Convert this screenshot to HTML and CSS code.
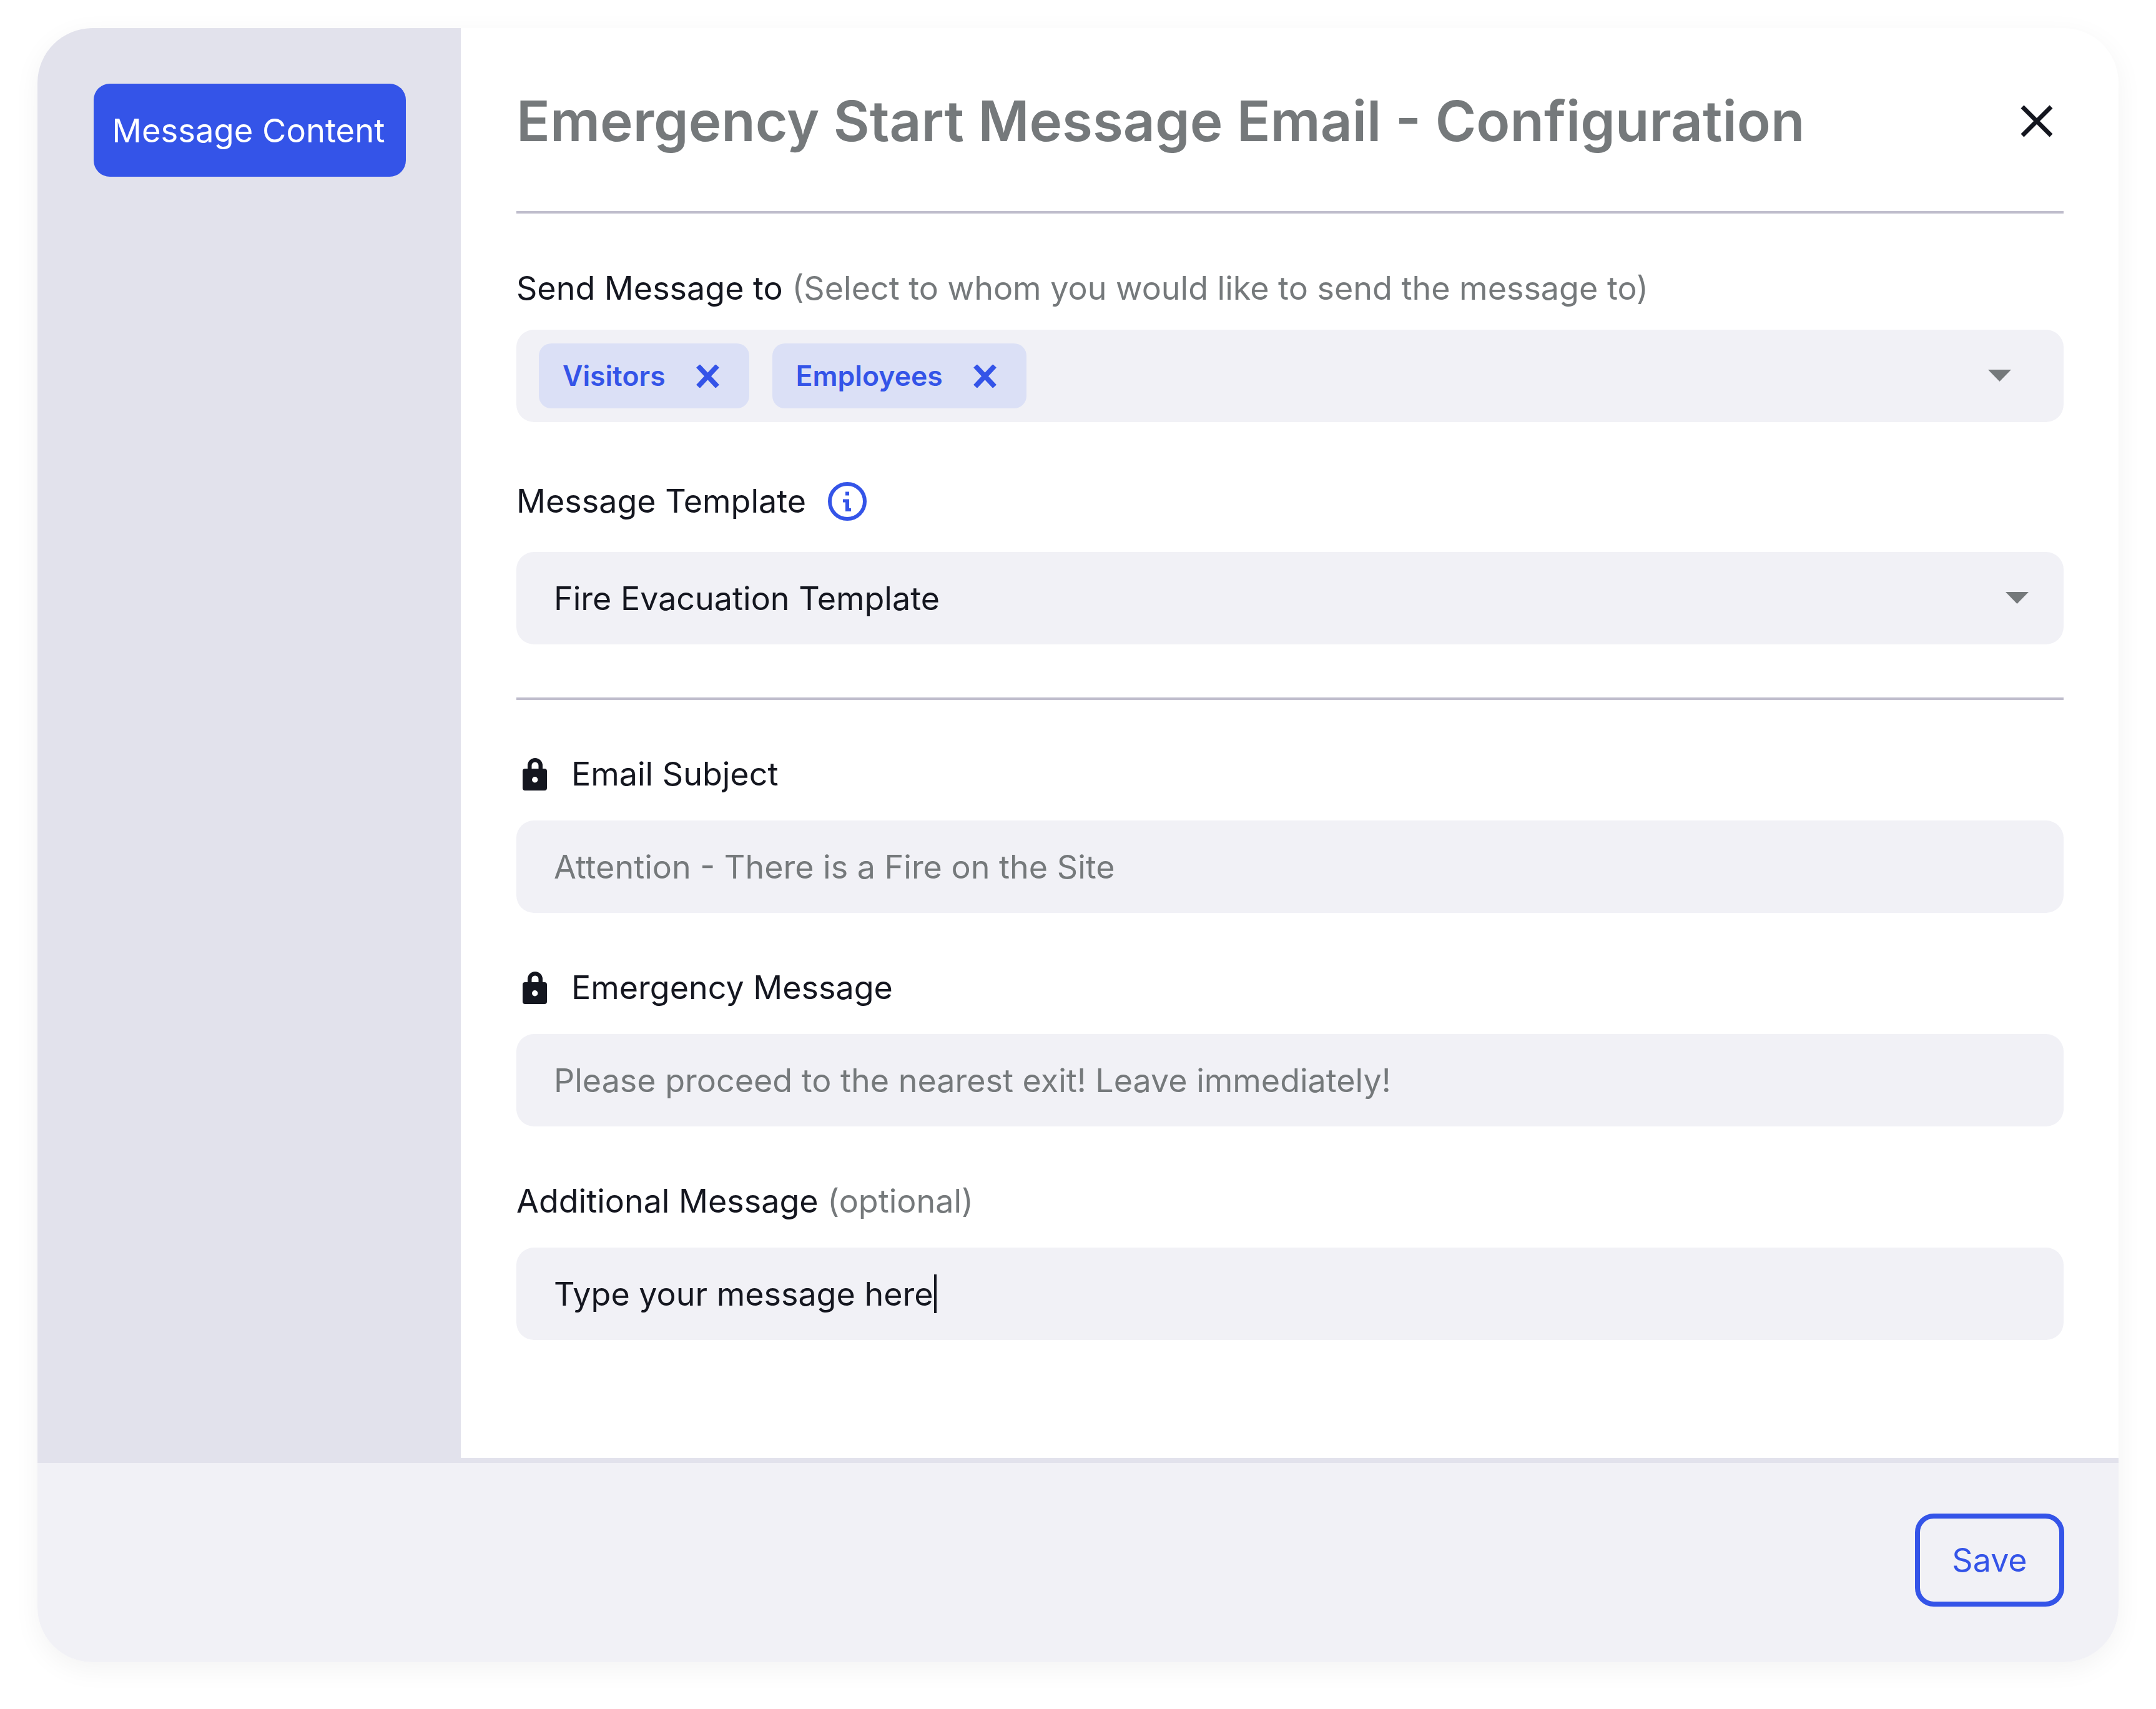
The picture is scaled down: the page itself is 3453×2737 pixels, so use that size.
FILE: index.html
```html
<!DOCTYPE html>
<html lang="en">
<head>
<meta charset="utf-8">
<title>Emergency Start Message Email - Configuration</title>
<link rel="stylesheet" href="styles.css">
</head>
<body>
<div class="card">
  <div class="body">
    <aside class="sidebar">
      <button class="tab">Message Content</button>
    </aside>
    <main class="main">
      <header class="header">
        <h1 class="title">Emergency Start Message Email - Configuration</h1>
        <svg class="close" viewBox="0 0 52 52"><path d="M3 3L49 49M49 3L3 49"/></svg>
      </header>
      <div class="label label-send"><span>Send Message to <span class="hint">(Select to whom you would like to send the message to)</span></span></div>
      <div class="input input-chips">
        <span class="chip">Visitors<svg class="chip-x" viewBox="0 0 37 37"><path d="M3 2L34 35M34 2L3 35"/></svg></span>
        <span class="chip">Employees<svg class="chip-x" viewBox="0 0 37 37"><path d="M3 2L34 35M34 2L3 35"/></svg></span>
        <svg class="caret caret-chips" viewBox="0 0 37 19"><path d="M0 0H37L18.5 19Z"/></svg>
      </div>
      <div class="label label-info"><span>Message Template</span><svg class="info" viewBox="0 0 62 62"><circle cx="31" cy="31" r="28"/><rect class="info-fill" x="28" y="15.5" width="6" height="6"/><path class="info-fill" d="M24 27.5H34V42H37V47H28V32.5H24Z"/></svg></div>
      <div class="input"><span>Fire Evacuation Template</span>
        <svg class="caret" viewBox="0 0 37 19"><path d="M0 0H37L18.5 19Z"/></svg>
      </div>
      <hr class="rule">
      <div class="label label-lock"><svg class="lock" viewBox="0 0 39 52"><path d="M8 18V12a12 12 0 0 1 24 0V18H25.5V12a5.5 5.5 0 0 0-11 0V18Z"/><path fill-rule="evenodd" d="M4 17H35a4 4 0 0 1 4 4V48a4 4 0 0 1-4 4H4a4 4 0 0 1-4-4V21a4 4 0 0 1 4-4ZM19.7 30a4.7 4.7 0 1 0 0 9.4a4.7 4.7 0 1 0 0-9.4Z"/></svg>Email Subject</div>
      <div class="input input-muted">Attention - There is a Fire on the Site</div>
      <div class="label label-lock label-next"><svg class="lock" viewBox="0 0 39 52"><path d="M8 18V12a12 12 0 0 1 24 0V18H25.5V12a5.5 5.5 0 0 0-11 0V18Z"/><path fill-rule="evenodd" d="M4 17H35a4 4 0 0 1 4 4V48a4 4 0 0 1-4 4H4a4 4 0 0 1-4-4V21a4 4 0 0 1 4-4ZM19.7 30a4.7 4.7 0 1 0 0 9.4a4.7 4.7 0 1 0 0-9.4Z"/></svg>Emergency Message</div>
      <div class="input input-muted">Please proceed to the nearest exit! Leave immediately!</div>
      <div class="label label-next"><span>Additional Message <span class="hint">(optional)</span></span></div>
      <div class="input">Type your message here<span class="cursor"></span></div>
    </main>
  </div>
  <footer class="footer">
    <button class="save">Save</button>
  </footer>
</div>
</body>
</html>
```
FILE: styles.css
```css
* { box-sizing: border-box; }
html, body { margin: 0; padding: 0; background: #fff; }
body {
  width: 3453px;
  height: 2737px;
  padding: 45px 60px 0;
  font-family: Inter, "Liberation Sans", sans-serif;
  font-size: 52px;
  color: #14161f;
  overflow: hidden;
}
.card {
  width: 3333px;
  height: 2617px;
  border-radius: 88px;
  background: #fff;
  box-shadow: 0 11px 44px rgba(0, 0, 0, 0.05);
  overflow: hidden;
  display: flex;
  flex-direction: column;
}
.body { display: flex; height: 2290px; }
.sidebar {
  width: 678px;
  height: 2297px;
  flex: none;
  background: #e2e2ec;
  padding: 89px 90px;
  position: relative;
  z-index: 1;
}
.tab {
  width: 500px;
  height: 149px;
  border: 0;
  border-radius: 26px;
  background: #3454e8;
  color: #fff;
  font: inherit;
  font-size: 52.5px;
  padding: 0 4px 0 0;
}
.main { flex: 1; padding: 0 88px 0 89px; }
.header {
  height: 297px;
  border-bottom: 4px solid #bfbdcc;
  display: flex;
  align-items: center;
  justify-content: space-between;
  padding: 0 17px 0 0;
}
.title {
  margin: 0;
  font-size: 89px;
  font-weight: 600;
  color: #75797b;
  line-height: 1;
  position: relative;
  top: 2px;
}
.close { width: 52px; height: 52px; flex: none; position: relative; top: 2px; }
.close path { fill: none; stroke: #14161f; stroke-width: 7; }
.label { height: 66px; line-height: 66px; display: flex; align-items: center; white-space: pre; }
.hint { color: #75797b; }
.label-send { margin-top: 87px; margin-bottom: 33px; }
.label-info { margin-top: 94px; margin-bottom: 48px; gap: 35px; }
.label-lock { margin-top: 86px; margin-bottom: 41px; }
.label-next { margin-top: 87px; margin-bottom: 41px; }
.input {
  height: 148px;
  border-radius: 28px;
  background: #f1f1f6;
  padding: 0 60px;
  display: flex;
  align-items: center;
  position: relative;
}
.input-muted { color: #75797b; }
.input-chips { padding: 0 36px; gap: 37px; }
.chip {
  height: 104px;
  border-radius: 20px;
  background: #dbe0f6;
  color: #3454e8;
  font-weight: 600;
  font-size: 44.5px;
  padding: 0 48px 0 38px;
  display: flex;
  align-items: center;
  gap: 49px;
}
.chip-x { width: 37px; height: 37px; flex: none; }
.chip-x path { fill: none; stroke: #3454e8; stroke-width: 8; }
.caret { width: 37px; height: 19px; fill: #75797b; position: absolute; right: 56px; top: 64px; }
.caret-chips { right: 84px; top: 64px; }
.info { width: 62px; height: 62px; flex: none; }
.info circle { fill: none; stroke: #3454e8; stroke-width: 6; }
.info-fill { fill: #3454e8; }
.rule { margin: 85px 0 0; border: 0; height: 4px; background: #bfbdcc; }
.lock { width: 39px; height: 52px; fill: #14161f; flex: none; margin: 0 39px 0 10px; }
.cursor { width: 4px; height: 62px; background: #14161f; margin-left: 1px; }
.footer {
  height: 327px;
  border-top: 8px solid #e2e2ec;
  background: #f1f1f6;
  display: flex;
  justify-content: flex-end;
  padding: 81px 87px 0 0;
}
.save {
  width: 239px;
  height: 149px;
  border: 8px solid #3454e8;
  border-radius: 30px;
  background: transparent;
  color: #3454e8;
  font: inherit;
  padding: 0;
}
```
